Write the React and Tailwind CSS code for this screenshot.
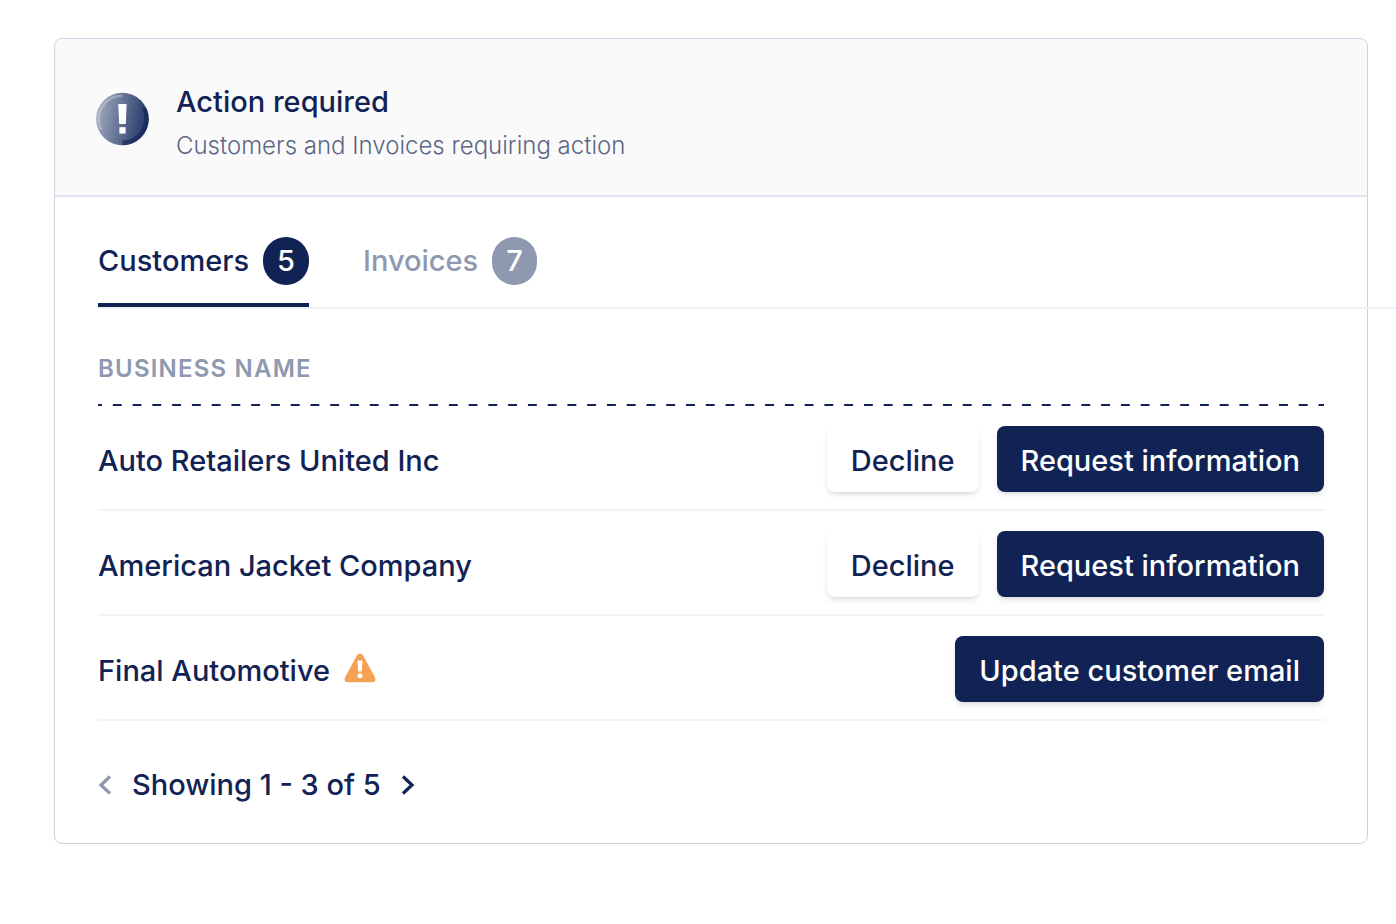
import React, { useState } from "react";

const customers = [
  { name: "Auto Retailers United Inc", actions: ["Decline", "Request information"] },
  { name: "American Jacket Company", actions: ["Decline", "Request information"] },
  { name: "Final Automotive", warning: true, actions: ["Update customer email"] },
];

const tabs = [
  { id: "customers", label: "Customers", count: 5 },
  { id: "invoices", label: "Invoices", count: 7 },
];

function AlertBadge() {
  return (
    <svg className="mt-2 size-[54px] shrink-0" viewBox="0 0 54 54" aria-hidden="true">
      <defs>
        <linearGradient id="alert-fill" x1="1" y1="22" x2="53" y2="32" gradientUnits="userSpaceOnUse">
          <stop offset="0" stopColor="#a0a9be" />
          <stop offset="1" stopColor="#203566" />
        </linearGradient>
      </defs>
      <circle cx="27.4" cy="27" r="26.3" fill="url(#alert-fill)" />
      <path d="M27 3.6A23.4 23.4 0 0 0 6.2 37.5" fill="none" stroke="#fff" strokeOpacity="0.28" strokeWidth="2.4" />
      <path d="M46.5 16L51 15.2A26.3 26.3 0 0 1 27.4 53.3V48.6A22 22 0 0 0 46.5 16Z" fill="#112354" fillOpacity="0.6" />
      <path d="M23.2 12H31.6L30.8 32H24.2Z" fill="#fff" />
      <rect x="24.4" y="35.2" width="6.2" height="6.4" fill="#fff" />
    </svg>
  );
}

function WarningIcon() {
  return (
    <svg className="h-[30px] w-8 shrink-0" viewBox="0 0 32 30" role="img" aria-label="Warning">
      <path d="M13 2.2Q16 -1.4 19 2.2L31 24.5Q32.4 29 28.5 29.3H3.5Q-0.4 29 1 24.5Z" fill="#f5a154" />
      <path d="M13.5 7.5H18.5L17.8 18.5H14.2Z" fill="#fff" />
      <circle cx="16" cy="22.8" r="2.5" fill="#fff" />
    </svg>
  );
}

function Chevron({ d }) {
  return (
    <svg className="h-5 w-3.5" viewBox="0 0 14 20" fill="none" stroke="currentColor" strokeWidth="3.2" aria-hidden="true">
      <path d={d} />
    </svg>
  );
}

function ActionButton({ label }) {
  const base = "h-[66px] rounded-lg px-6 pt-1 shadow-md";
  const color = label === "Decline" ? "bg-white text-[#112354]" : "bg-[#112354] text-white";
  return (
    <button type="button" className={`${base} ${color}`}>
      {label}
    </button>
  );
}

export default function App() {
  const [active, setActive] = useState("customers");

  return (
    <div className="bg-white pt-[38px] pr-7 pb-20 pl-[54px] font-['Inter',sans-serif] text-[29px] leading-9 font-medium text-[#112354]">
      <section className="rounded-lg border border-[#cbd1e1]">
        <header className="flex items-start gap-[27px] rounded-t-lg border-b-2 border-[#dfe3ee] bg-[#fafafa] px-10 pt-[45px] pb-[31px]">
          <AlertBadge />
          <div>
            <h2>Action required</h2>
            <p className="mt-2 text-2xl leading-9 font-light text-[#5c6784]">Customers and Invoices requiring action</p>
          </div>
        </header>

        {/* the tab rule runs past the card to the edge of the page */}
        <nav className="mr-[-29px] ml-[43px] flex gap-[54px] border-b-2 border-[#f0f1f4] pt-10" role="tablist">
          {tabs.map((tab) => (
            <button
              key={tab.id}
              type="button"
              role="tab"
              aria-selected={active === tab.id}
              onClick={() => setActive(tab.id)}
              className={`flex items-center gap-3.5 border-b-4 pb-[18px] ${
                active === tab.id ? "border-[#112354]" : "border-transparent text-[#8e99af]"
              }`}
            >
              {tab.label}
              <span
                className={`flex h-12 items-center rounded-full px-3.5 text-white ${
                  active === tab.id ? "bg-[#112354]" : "bg-[#8e99af]"
                }`}
              >
                {tab.count}
              </span>
            </button>
          ))}
        </nav>

        <div className="px-[43px]">
          <table className="w-full border-separate border-spacing-0">
            <thead className="bg-[linear-gradient(90deg,#112354_22%,transparent_22%_77%,#112354_77%)] bg-[length:calc(100%/62)_2px] bg-bottom-left bg-repeat-x">
              <tr>
                <th colSpan={2} className="pt-11 pb-[21px] text-left text-2xl leading-8 font-semibold tracking-wider text-[#8e99af]">
                  BUSINESS NAME
                </th>
              </tr>
            </thead>
            <tbody>
              {customers.map((customer) => (
                <tr key={customer.name}>
                  <td className="border-b-2 border-[#f3f4f5] pt-5 pb-[17px]">
                    <div className="flex items-start gap-3.5 pt-1">
                      {customer.name}
                      {customer.warning && <WarningIcon />}
                    </div>
                  </td>
                  <td className="border-b-2 border-[#f3f4f5] pt-5 pb-[17px]">
                    <div className="flex justify-end gap-[18px]">
                      {customer.actions.map((label) => (
                        <ActionButton key={label} label={label} />
                      ))}
                    </div>
                  </td>
                </tr>
              ))}
            </tbody>
          </table>

          <div className="flex items-center gap-5 pt-[46px] pb-10">
            <button type="button" aria-label="Previous page" disabled className="text-[#8e99af]">
              <Chevron d="M12 1.5L3 10L12 18.5" />
            </button>
            <span>Showing 1 - 3 of 5</span>
            <button type="button" aria-label="Next page">
              <Chevron d="M2 1.5L11 10L2 18.5" />
            </button>
          </div>
        </div>
      </section>
    </div>
  );
}
